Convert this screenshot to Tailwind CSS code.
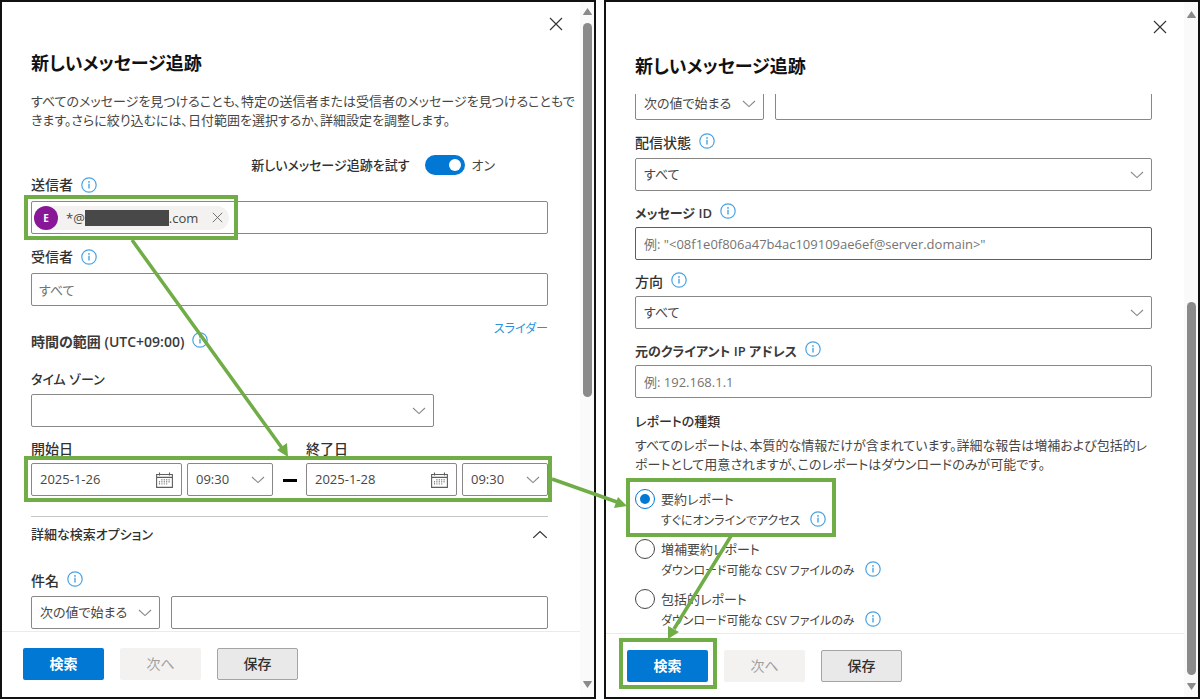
<!DOCTYPE html>
<html lang="ja">
<head>
    <meta charset="UTF-8">
    <meta name="viewport" content="width=device-width, initial-scale=1.0">
    <title>新しいメッセージ追跡</title>
    <script src="https://cdn.jsdelivr.net/npm/@tailwindcss/browser@4"></script>
</head>
<body class="relative bg-white font-['Open_Sans','Noto_Sans_CJK_JP',sans-serif] [font-feature-settings:'palt'] text-[13px] leading-5 text-[#484644]">
    <!-- Shared icons -->
    <svg class="hidden" xmlns="http://www.w3.org/2000/svg">
        <symbol id="info" viewBox="0 0 16 16">
            <circle cx="8" cy="8" r="7.2" fill="none" stroke="#4aa3e2" stroke-width="1.2"/>
            <path d="M8 6.8v4.6" stroke="#4aa3e2" stroke-width="1.4"/>
            <circle cx="8" cy="4.9" r=".9" fill="#4aa3e2"/>
        </symbol>
        <symbol id="chevron" viewBox="0 0 14 8">
            <path d="M1 1l6 5.6L13 1" fill="none" stroke="currentColor" stroke-width="1.1"/>
        </symbol>
        <symbol id="close" viewBox="0 0 14 14">
            <path d="M1 1l12 12M13 1L1 13" fill="none" stroke="currentColor" stroke-width="1.1"/>
        </symbol>
        <symbol id="calendar" viewBox="0 0 17 16">
            <path d="M.6 2.5h15.8v12.9H.6zM.6 5.4h15.8M3.5.5v3M13.5.5v3" fill="none" stroke="#605e5c" stroke-width="1.1"/>
            <path d="M3.5 9v4M5.900 7v6M8.300 7v6M10.700 7v6M13.100 7v4" fill="none" stroke="#8a8886" stroke-width="1.1" stroke-dasharray="1.4 .7"/>
        </symbol>
    </svg>

    <main class="grid h-screen grid-cols-2 gap-2 pb-0.5">
        <!-- Left panel: top of the form -->
        <section class="flex min-w-0 border-2 border-[#111]">
            <div class="flex min-w-0 flex-1 flex-col">
                <header class="pt-[6px]">
                    <div class="flex justify-end pr-2">
                        <button type="button" aria-label="閉じる" class="flex size-8 items-center justify-center text-[#323130]"><svg class="size-[14px]"><use href="#close"/></svg></button>
                    </div>
                    <h1 class="mt-[9px] pl-[29px] text-lg leading-7 font-bold text-[#111]">新しいメッセージ追跡</h1>
                </header>

                <div class="min-h-0 flex-1 overflow-hidden pt-[15px] pr-8 pl-[29px]">
                    <p class="leading-[19px] whitespace-nowrap">すべてのメッセージを見つけることも、特定の送信者または受信者のメッセージを見つけることもで<br>きます。さらに絞り込むには、日付範囲を選択するか、詳細設定を調整します。</p>

                    <div class="mt-[25px] flex h-5 items-center justify-end pr-[53px]">
                        <label for="tryNew" class="font-medium text-[#323130]">新しいメッセージ追跡を試す</label>
                        <span class="ml-4 grid items-center">
                            <input id="tryNew" type="checkbox" role="switch" checked class="col-start-1 row-start-1 h-5 w-10 appearance-none rounded-full bg-[#0078d4]">
                            <span class="pointer-events-none col-start-1 row-start-1 mr-1 size-3 justify-self-end rounded-full bg-white"></span>
                        </span>
                        <span class="ml-1.5">オン</span>
                    </div>

                    <div class="flex h-5 items-center gap-2">
                        <label for="sender" class="text-sm font-medium text-[#323130]">送信者</label>
                        <svg class="size-4"><use href="#info"/></svg>
                    </div>
                    <div class="mt-[6px] flex h-[33px] items-center rounded-xs border border-[#8a8886] pl-[2px]">
                        <div class="flex h-6 items-center rounded-full bg-[#f3f2f1] pr-[6px]">
                            <span class="flex size-6 items-center justify-center rounded-full bg-[#881798] text-[10px] font-bold text-white">E</span>
                            <span class="ml-2">*@</span>
                            <span class="h-4 w-[84px] bg-[#484848]"></span>
                            <span>.com</span>
                            <button type="button" aria-label="削除" class="ml-[14px] text-[#605e5c]"><svg class="size-[11px]"><use href="#close"/></svg></button>
                        </div>
                        <input id="sender" type="text" class="h-full min-w-0 flex-1 px-2 outline-none">
                    </div>

                    <div class="mt-[13px] flex h-5 items-center gap-2">
                        <label for="recipient" class="text-sm font-medium text-[#323130]">受信者</label>
                        <svg class="size-4"><use href="#info"/></svg>
                    </div>
                    <input id="recipient" type="text" placeholder="すべて" class="mt-[6px] block h-[33px] w-full rounded-xs border border-[#8a8886] px-[7px] placeholder:text-[#767472]">

                    <div class="mt-[13px] flex items-start justify-between">
                        <div class="mt-[13px] flex h-5 items-start gap-2">
                            <h2 class="text-sm leading-5 font-semibold text-[#3b3a39]">時間の範囲 (UTC+09:00)</h2>
                            <svg class="size-4"><use href="#info"/></svg>
                        </div>
                        <a href="#" class="text-xs leading-5 text-[#2b8fdb]">スライダー</a>
                    </div>

                    <label for="timezone" class="mt-[17px] block font-medium text-[#323130]">タイム ゾーン</label>
                    <div class="mt-[5px] grid w-[403px] items-center">
                        <select id="timezone" class="col-start-1 row-start-1 h-[33px] w-full appearance-none rounded-xs border border-[#8a8886] px-2 pb-0.5"><option></option></select>
                        <svg class="pointer-events-none col-start-1 row-start-1 mr-2 h-2 w-[14px] justify-self-end text-[#8a8886]"><use href="#chevron"/></svg>
                    </div>

                    <div class="mt-3 flex items-end justify-between">
                        <div>
                            <label for="startDate" class="block text-sm font-medium text-[#323130]">開始日</label>
                            <div class="mt-1 flex gap-[5px]">
                                <div class="flex h-[33px] w-[151px] items-center rounded-xs border border-[#8a8886] px-2">
                                    <input id="startDate" type="text" value="2025-1-26" class="min-w-0 flex-1 pb-0.5 outline-none">
                                    <svg class="h-4 w-[17px]"><use href="#calendar"/></svg>
                                </div>
                                <div class="grid w-[86px] items-center">
                                    <select aria-label="開始時刻" class="col-start-1 row-start-1 h-[33px] appearance-none rounded-xs border border-[#8a8886] px-2 pb-0.5"><option>09:30</option></select>
                                    <svg class="pointer-events-none col-start-1 row-start-1 mr-2 h-2 w-[14px] justify-self-end text-[#8a8886]"><use href="#chevron"/></svg>
                                </div>
                            </div>
                        </div>
                        <span class="mb-[14px] h-[3px] w-[14px] bg-black"></span>
                        <div>
                            <label for="endDate" class="block text-sm font-medium text-[#323130]">終了日</label>
                            <div class="mt-1 flex gap-[5px]">
                                <div class="flex h-[33px] w-[151px] items-center rounded-xs border border-[#8a8886] px-2">
                                    <input id="endDate" type="text" value="2025-1-28" class="min-w-0 flex-1 pb-0.5 outline-none">
                                    <svg class="h-4 w-[17px]"><use href="#calendar"/></svg>
                                </div>
                                <div class="grid w-[86px] items-center">
                                    <select aria-label="終了時刻" class="col-start-1 row-start-1 h-[33px] appearance-none rounded-xs border border-[#8a8886] px-2 pb-0.5"><option>09:30</option></select>
                                    <svg class="pointer-events-none col-start-1 row-start-1 mr-2 h-2 w-[14px] justify-self-end text-[#8a8886]"><use href="#chevron"/></svg>
                                </div>
                            </div>
                        </div>
                    </div>

                    <button type="button" class="mt-5 flex w-full items-center justify-between border-t border-[#c8c6c4] pt-[7px] font-medium text-[#323130]">
                        詳細な検索オプション
                        <svg class="h-[9px] w-4 rotate-180"><use href="#chevron"/></svg>
                    </button>

                    <div class="mt-[27px] flex h-5 items-start gap-2">
                        <label for="subject" class="text-sm font-medium text-[#323130]">件名</label>
                        <svg class="size-4"><use href="#info"/></svg>
                    </div>
                    <div class="mt-[5px] flex gap-[11px]">
                        <div class="grid w-[129px] items-center">
                            <select aria-label="件名の条件" class="col-start-1 row-start-1 h-[33px] appearance-none rounded-xs border border-[#8a8886] px-2 pb-0.5"><option>次の値で始まる</option></select>
                            <svg class="pointer-events-none col-start-1 row-start-1 mr-2 h-2 w-[14px] justify-self-end text-[#8a8886]"><use href="#chevron"/></svg>
                        </div>
                        <input id="subject" type="text" class="h-[33px] min-w-0 flex-1 rounded-xs border border-[#8a8886] px-2">
                    </div>
                </div>

                <footer class="flex gap-4 border-t border-[#edebe9] pt-4 pb-[17px] pl-[21px] text-sm">
                    <button type="button" class="h-8 w-[81px] rounded-xs bg-[#0078d4] font-bold text-white">検索</button>
                    <button type="button" disabled class="h-8 w-[81px] rounded-xs bg-[#f3f2f1] text-[#a19f9d]">次へ</button>
                    <button type="button" class="h-8 w-[81px] rounded-xs border border-[#a6a4a2] bg-[#e9e9e9] font-medium text-[#323130]">保存</button>
                </footer>
            </div>
            <div class="flex w-[14px] flex-col items-center bg-[#fafafa] pt-[6px] pb-[9px]">
                <svg class="h-[7px] w-[9px]" viewBox="0 0 9 7"><path d="M4.5 0L9 6.5Q9 7 8 7H1Q0 7 0 6.5z" fill="#8a8a8a"/></svg>
                <div class="mt-2 flex-1"><div class="h-[374px] w-[9px] rounded-full bg-[#8a8a8a]"></div></div>
                <svg class="h-[7px] w-[9px]" viewBox="0 0 9 7"><path d="M4.5 7L9 .5Q9 0 8 0H1Q0 0 0 .5z" fill="#8a8a8a"/></svg>
            </div>
        </section>

        <!-- Right panel: same form, scrolled to the end -->
        <section class="flex min-w-0 border-2 border-[#111]">
            <div class="flex min-w-0 flex-1 flex-col">
                <header class="pt-[9px]">
                    <div class="flex justify-end pr-2">
                        <button type="button" aria-label="閉じる" class="flex size-8 items-center justify-center text-[#323130]"><svg class="size-[14px]"><use href="#close"/></svg></button>
                    </div>
                    <h1 class="mt-[9px] pl-[29px] text-lg leading-7 font-bold text-[#111]">新しいメッセージ追跡</h1>
                </header>

                <div class="mt-[14px] min-h-0 flex-1 overflow-hidden pr-8 pl-[29px]">
                    <div class="-mt-[7px] flex gap-[11px]">
                        <div class="grid w-[129px] items-center">
                            <select aria-label="件名の条件" class="col-start-1 row-start-1 h-[33px] appearance-none rounded-xs border border-[#8a8886] px-2 pb-0.5"><option>次の値で始まる</option></select>
                            <svg class="pointer-events-none col-start-1 row-start-1 mr-2 h-2 w-[14px] justify-self-end text-[#8a8886]"><use href="#chevron"/></svg>
                        </div>
                        <input aria-label="件名" type="text" class="h-[33px] min-w-0 flex-1 rounded-xs border border-[#8a8886] px-2">
                    </div>

                    <div class="mt-[13px] flex h-5 items-start gap-2">
                        <label for="status" class="text-sm font-medium text-[#323130]">配信状態</label>
                        <svg class="size-4"><use href="#info"/></svg>
                    </div>
                    <div class="mt-[5px] grid items-center">
                        <select id="status" class="col-start-1 row-start-1 h-[33px] appearance-none rounded-xs border border-[#8a8886] px-2 pb-0.5"><option>すべて</option></select>
                        <svg class="pointer-events-none col-start-1 row-start-1 mr-2 h-2 w-[14px] justify-self-end text-[#8a8886]"><use href="#chevron"/></svg>
                    </div>

                    <div class="mt-3 flex h-5 items-start gap-2">
                        <label for="messageId" class="font-semibold text-[#3b3a39]">メッセージ ID</label>
                        <svg class="size-4"><use href="#info"/></svg>
                    </div>
                    <input id="messageId" type="text" placeholder='例: "&lt;08f1e0f806a47b4ac109109ae6ef@server.domain&gt;"' class="mt-1 block h-[33px] w-full rounded-xs border border-[#605e5c] px-2 placeholder:text-[#767472]">

                    <div class="mt-3 flex h-5 items-start gap-2">
                        <label for="direction" class="text-sm font-medium text-[#323130]">方向</label>
                        <svg class="size-4"><use href="#info"/></svg>
                    </div>
                    <div class="mt-1 grid items-center">
                        <select id="direction" class="col-start-1 row-start-1 h-[33px] appearance-none rounded-xs border border-[#8a8886] px-2 pb-0.5"><option>すべて</option></select>
                        <svg class="pointer-events-none col-start-1 row-start-1 mr-2 h-2 w-[14px] justify-self-end text-[#8a8886]"><use href="#chevron"/></svg>
                    </div>

                    <div class="mt-3 flex h-5 items-start gap-2">
                        <label for="clientIp" class="font-semibold text-[#3b3a39]">元のクライアント IP アドレス</label>
                        <svg class="size-4"><use href="#info"/></svg>
                    </div>
                    <input id="clientIp" type="text" placeholder="例: 192.168.1.1" class="mt-1 block h-[33px] w-full rounded-xs border border-[#8a8886] px-2 placeholder:text-[#767472]">

                    <fieldset class="mt-[13px]">
                        <legend class="font-medium text-[#323130]">レポートの種類</legend>
                        <p class="mt-[5px] leading-[19px] whitespace-nowrap">すべてのレポートは、本質的な情報だけが含まれています。詳細な報告は増補および包括的レ<br>ポートとして用意されますが、このレポートはダウンロードのみが可能です。</p>

                        <div class="mt-[15px] flex flex-col gap-[6px]">
                            <div class="flex items-start gap-[6px]">
                                <input id="summary" type="radio" name="report" checked class="size-5 appearance-none rounded-full border border-[#0078d4] bg-[#0078d4] bg-clip-content p-1">
                                <div>
                                    <label for="summary" class="block">要約レポート</label>
                                    <div class="flex h-6 items-center gap-[10px] text-xs">すぐにオンラインでアクセス <svg class="mb-1 size-4"><use href="#info"/></svg></div>
                                </div>
                            </div>
                            <div class="flex items-start gap-[6px]">
                                <input id="enhanced" type="radio" name="report" class="size-5 appearance-none rounded-full border border-[#484644]">
                                <div>
                                    <label for="enhanced" class="block">増補要約レポート</label>
                                    <div class="flex h-6 items-center gap-[10px] text-xs">ダウンロード可能な CSV ファイルのみ <svg class="mb-1 size-4"><use href="#info"/></svg></div>
                                </div>
                            </div>
                            <div class="flex items-start gap-[6px]">
                                <input id="extended" type="radio" name="report" class="size-5 appearance-none rounded-full border border-[#484644]">
                                <div>
                                    <label for="extended" class="block">包括的レポート</label>
                                    <div class="flex h-6 items-center gap-[10px] text-xs">ダウンロード可能な CSV ファイルのみ <svg class="mb-1 size-4"><use href="#info"/></svg></div>
                                </div>
                            </div>
                        </div>
                    </fieldset>
                </div>

                <footer class="flex gap-4 border-t border-[#edebe9] pt-4 pb-[15px] pl-[21px] text-sm">
                    <button type="button" class="h-8 w-[81px] rounded-xs bg-[#0078d4] font-bold text-white">検索</button>
                    <button type="button" disabled class="h-8 w-[81px] rounded-xs bg-[#f3f2f1] text-[#a19f9d]">次へ</button>
                    <button type="button" class="h-8 w-[81px] rounded-xs border border-[#a6a4a2] bg-[#e9e9e9] font-medium text-[#323130]">保存</button>
                </footer>
            </div>
            <div class="flex w-[14px] flex-col items-center bg-[#fafafa] pt-[9px] pb-[7px]">
                <svg class="h-[7px] w-[9px]" viewBox="0 0 9 7"><path d="M4.5 0L9 6.5Q9 7 8 7H1Q0 7 0 6.5z" fill="#8a8a8a"/></svg>
                <div class="flex flex-1 items-end pb-2"><div class="h-[373px] w-[9px] rounded-full bg-[#8a8a8a]"></div></div>
                <svg class="h-[7px] w-[9px]" viewBox="0 0 9 7"><path d="M4.5 7L9 .5Q9 0 8 0H1Q0 0 0 .5z" fill="#8a8a8a"/></svg>
            </div>
        </section>
    </main>

    <!-- Step highlights and arrows -->
    <svg class="pointer-events-none absolute inset-0 h-full w-full" fill="none" stroke="#70ad47">
        <g stroke-width="4">
            <rect x="26" y="197" width="210" height="41"/>
            <rect x="26" y="458" width="524" height="42"/>
            <rect x="628" y="480" width="206" height="55"/>
            <rect x="621" y="640" width="94" height="47"/>
        </g>
        <g stroke-width="3.5">
            <path d="M132 240L282 448M552 479L617 502M731 536L674 629"/>
        </g>
        <g fill="#70ad47" stroke="none">
            <path d="M288 457L277 450L287 443z"/>
            <path d="M627 506L614 508L618 497z"/>
            <path d="M668 639L668 626L679 632z"/>
        </g>
    </svg>
</body>
</html>
